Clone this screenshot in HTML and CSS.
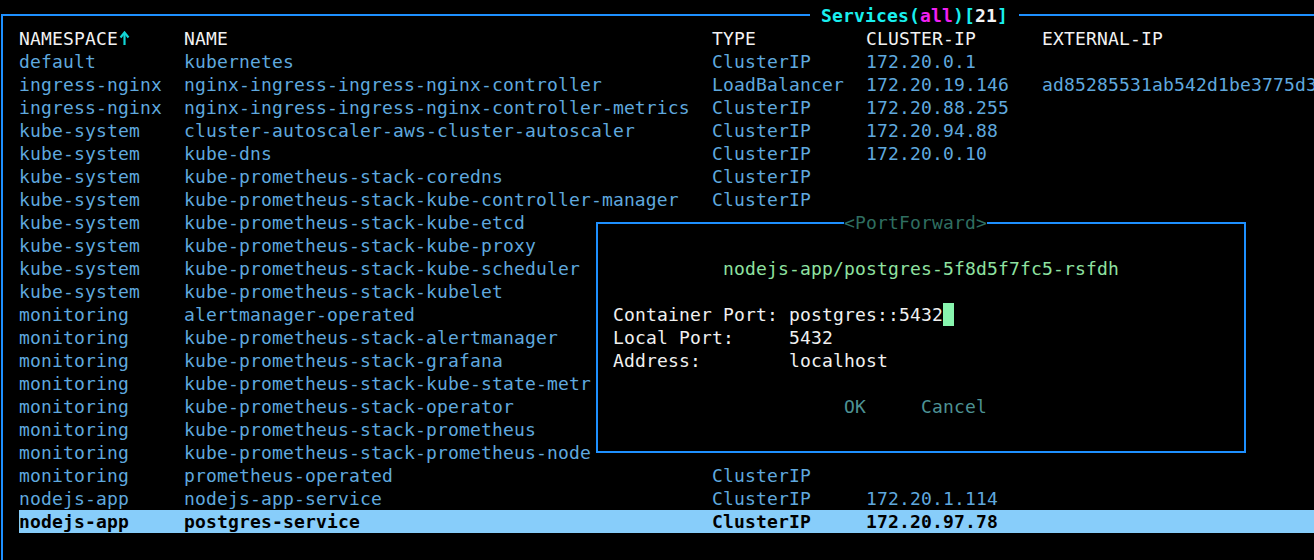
FILE: index.html
```html
<!DOCTYPE html>
<html>
<head>
<meta charset="utf-8">
<link rel="stylesheet" href="styles.css">
</head>
<body>
<div class="screen">
  <div class="frame">
    <div class="frame-title"><span class="aqua">Services(</span><span class="mag">all</span><span class="aqua">)[</span><span class="white">21</span><span class="aqua">]</span></div>
    <div class="table">
      <div class="row head"><span class="ns-head">NAMESPACE<svg class="arrow" width="11" height="15" viewBox="0 0 11 15"><path d="M5.5 2 V14" stroke="#12d6d6" stroke-width="2.2" fill="none"/><path d="M1.5 6.5 L5.5 1.5 L9.5 6.5" stroke="#12d6d6" stroke-width="2.2" fill="none" stroke-linejoin="miter"/></svg></span><span>NAME</span><span>TYPE</span><span>CLUSTER-IP</span><span>EXTERNAL-IP</span></div>
      <div class="row"><span>default</span><span>kubernetes</span><span>ClusterIP</span><span>172.20.0.1</span><span></span></div>
      <div class="row"><span>ingress-nginx</span><span>nginx-ingress-ingress-nginx-controller</span><span>LoadBalancer</span><span>172.20.19.146</span><span>ad85285531ab542d1be3775d3</span></div>
      <div class="row"><span>ingress-nginx</span><span>nginx-ingress-ingress-nginx-controller-metrics</span><span>ClusterIP</span><span>172.20.88.255</span><span></span></div>
      <div class="row"><span>kube-system</span><span>cluster-autoscaler-aws-cluster-autoscaler</span><span>ClusterIP</span><span>172.20.94.88</span><span></span></div>
      <div class="row"><span>kube-system</span><span>kube-dns</span><span>ClusterIP</span><span>172.20.0.10</span><span></span></div>
      <div class="row"><span>kube-system</span><span>kube-prometheus-stack-coredns</span><span>ClusterIP</span><span></span><span></span></div>
      <div class="row"><span>kube-system</span><span>kube-prometheus-stack-kube-controller-manager</span><span>ClusterIP</span><span></span><span></span></div>
      <div class="row"><span>kube-system</span><span>kube-prometheus-stack-kube-etcd</span><span></span><span></span><span></span></div>
      <div class="row"><span>kube-system</span><span>kube-prometheus-stack-kube-proxy</span><span></span><span></span><span></span></div>
      <div class="row"><span>kube-system</span><span>kube-prometheus-stack-kube-scheduler</span><span></span><span></span><span></span></div>
      <div class="row"><span>kube-system</span><span>kube-prometheus-stack-kubelet</span><span></span><span></span><span></span></div>
      <div class="row"><span>monitoring</span><span>alertmanager-operated</span><span></span><span></span><span></span></div>
      <div class="row"><span>monitoring</span><span>kube-prometheus-stack-alertmanager</span><span></span><span></span><span></span></div>
      <div class="row"><span>monitoring</span><span>kube-prometheus-stack-grafana</span><span></span><span></span><span></span></div>
      <div class="row"><span>monitoring</span><span>kube-prometheus-stack-kube-state-metr</span><span></span><span></span><span></span></div>
      <div class="row"><span>monitoring</span><span>kube-prometheus-stack-operator</span><span></span><span></span><span></span></div>
      <div class="row"><span>monitoring</span><span>kube-prometheus-stack-prometheus</span><span></span><span></span><span></span></div>
      <div class="row"><span>monitoring</span><span>kube-prometheus-stack-prometheus-node</span><span></span><span></span><span></span></div>
      <div class="row"><span>monitoring</span><span>prometheus-operated</span><span>ClusterIP</span><span></span><span></span></div>
      <div class="row"><span>nodejs-app</span><span>nodejs-app-service</span><span>ClusterIP</span><span>172.20.1.114</span><span></span></div>
      <div class="row selected"><span>nodejs-app</span><span>postgres-service</span><span>ClusterIP</span><span>172.20.97.78</span><span></span></div>
    </div>
  </div>

  <div class="pf">
    <div class="pf-box">
      <div class="pf-title">&lt;PortForward&gt;</div>
      <div class="pf-pod">nodejs-app/postgres-5f8d5f7fc5-rsfdh</div>
      <div class="pf-form">
        <div class="field"><span class="label">Container Port:</span><span class="value">postgres::5432<span class="cursor"></span></span></div>
        <div class="field"><span class="label">Local Port:</span><span class="value">5432</span></div>
        <div class="field"><span class="label">Address:</span><span class="value">localhost</span></div>
      </div>
      <div class="pf-buttons"><span class="btn">OK</span><span class="btn">Cancel</span></div>
    </div>
  </div>
</div>
</body>
</html>
```

FILE: styles.css
```css
html, body {
  margin: 0;
  padding: 0;
  background: #000;
}
body {
  width: 1314px;
  height: 560px;
  overflow: hidden;
  font-family: "DejaVu Sans Mono", "Liberation Mono", monospace;
  font-size: 18px;
  letter-spacing: 0.16px;
  line-height: 23px;
  color: #5fa8de;
}
.screen {
  position: relative;
  width: 1314px;
  height: 560px;
  box-sizing: border-box;
  padding: 14px 0 0 1px;
  overflow: hidden;
}
.frame {
  position: relative;
  border-top: 2px solid #1e90ff;
  border-left: 2px solid #1e90ff;
  padding: 11px 0 30px 16px;
}
.frame-title {
  position: absolute;
  left: 807px;
  top: -12px;
  padding: 0 11px;
  background: #000;
  font-weight: bold;
  white-space: pre;
}
.aqua { color: #19eeee; }
.mag { color: #f020f0; }
.white { color: #f4f4f4; }

.table {
  display: flex;
  flex-direction: column;
}
.row {
  display: grid;
  grid-template-columns: 165px 528px 154px 176px 1fr;
  height: 23px;
  white-space: pre;
}
.head {
  color: #f2f2f2;
}
.ns-head {
  display: flex;
  align-items: center;
}
.arrow {
  display: block;
  margin-left: 1px;
}
.selected {
  background: #87cdfa;
  color: #000;
  font-weight: bold;
}

.pf {
  position: absolute;
  left: 591px;
  top: 211px;
  width: 660px;
  height: 253px;
  box-sizing: border-box;
  padding: 11px 5px;
  background: #000;
}
.pf-box {
  position: relative;
  height: 100%;
  box-sizing: border-box;
  border: 2px solid #1e90ff;
  padding-top: 33px;
}
.pf-title {
  position: absolute;
  left: 246px;
  top: -13px;
  background: #000;
  color: #2f6e60;
  white-space: pre;
}
.pf-pod {
  text-align: center;
  color: #8fe2a0;
  white-space: pre;
}
.pf-form {
  margin-top: 23px;
  padding-left: 15px;
  display: flex;
  flex-direction: column;
}
.field {
  display: grid;
  grid-template-columns: 176px 1fr;
  height: 23px;
  color: #f0f0f0;
  white-space: pre;
}
.value {
  display: flex;
}
.cursor {
  display: inline-block;
  width: 11px;
  height: 23px;
  background: #88f5ae;
}
.pf-buttons {
  margin-top: 23px;
  padding-left: 246px;
  display: flex;
  gap: 55px;
  color: #4d9294;
}
```
